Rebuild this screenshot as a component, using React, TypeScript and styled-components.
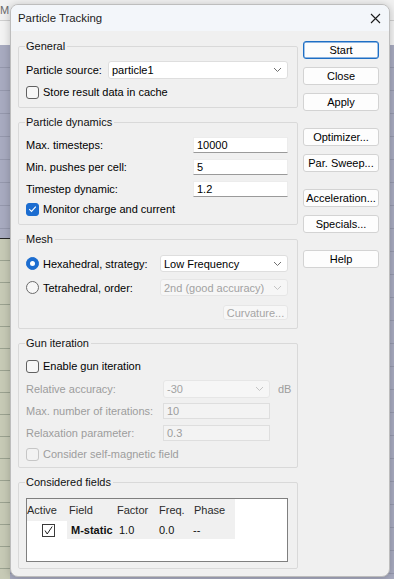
import React from 'react';
import styled, { createGlobalStyle, css } from 'styled-components';

const GlobalStyle = createGlobalStyle`
  html, body {
    margin: 0;
    padding: 0;
  }
  body {
    font-family: "Liberation Sans", Arial, sans-serif;
    font-size: 11px;
    color: #000;
  }
  * {
    box-sizing: border-box;
  }
`;

const Desktop = styled.div`
  width: 394px;
  height: 579px;
  overflow: hidden;
  display: flex;
  align-items: flex-start;
  background:
    repeating-linear-gradient(to bottom, transparent 0 21px, #9ba290 21px 22px) 0 239px / 10px 340px no-repeat,
    linear-gradient(#262626 0 1px, #c7cab6 1px) 0 238px / 10px 341px no-repeat,
    repeating-linear-gradient(to bottom, transparent 0 22px, #9598ad 22px 23px) 0 45px / 100% 100% no-repeat,
    linear-gradient(to bottom, #f1f1f1 0 20px, #cfcfcf 20px 21px, #f3f3f3 21px 45px, #a8abc0 45px);
`;

const Gutter = styled.div`
  width: 10px;
  flex: none;
  padding-top: 4px;
  font-size: 11px;
  color: #6b6b6b;
  overflow: hidden;
  white-space: nowrap;
`;

const Dialog = styled.div`
  width: 380px;
  height: 573px;
  margin-top: 4px;
  flex: none;
  background: #f0f0f0;
  border: 1px solid #bdbdbd;
  border-radius: 8px;
  box-shadow: 0 1px 8px rgba(0, 0, 0, 0.22);
  overflow: hidden;
  display: flex;
  flex-direction: column;
`;

const TitleBar = styled.div`
  height: 26px;
  flex: none;
  display: flex;
  align-items: center;
  justify-content: space-between;
  padding: 0 8px 0 7px;
  background: #f3f6fa;
`;

const Title = styled.span`
  font-family: "Liberation Sans", Arial, sans-serif;
  font-size: 11.4px;
  color: #1b1b1b;
`;

const CloseIcon = styled.svg`
  display: block;
`;

const Body = styled.div`
  flex: 1;
  display: flex;
  gap: 5px;
  padding: 8px 9px 0 7px;
`;

const Groups = styled.div`
  width: 280px;
  flex: none;
  display: flex;
  flex-direction: column;
  gap: 7px;
`;

const Group = styled.fieldset<{ $pt: number; $pb: number }>`
  margin: 0;
  min-width: 0;
  border: 1px solid #d9d9d9;
  border-radius: 2px;
  padding: ${p => p.$pt}px 9px ${p => p.$pb}px 7px;
  display: flex;
  flex-direction: column;
`;

const Legend = styled.legend`
  padding: 0 2px 0 1px;
  margin-left: -1px;
  line-height: 14px;
  font-size: 11px;
  color: #111;
`;

const Row = styled.div<{ $h: number; $mt?: number; $end?: boolean }>`
  height: ${p => p.$h}px;
  margin-top: ${p => p.$mt || 0}px;
  display: flex;
  align-items: center;
  justify-content: ${p => (p.$end ? 'flex-end' : 'flex-start')};
`;

const Label = styled.span<{ $disabled?: boolean; $w?: number }>`
  color: ${p => (p.$disabled ? '#9d9d9d' : '#000')};
  white-space: nowrap;
  ${p => p.$w && css`width: ${p.$w}px; flex: none;`}
`;

const Spacer = styled.span`
  flex: 1;
`;

const Suffix = styled.span<{ $disabled?: boolean }>`
  width: 18px;
  flex: none;
  padding-left: 8px;
  color: ${p => (p.$disabled ? '#9d9d9d' : '#000')};
`;

const Box = styled.span<{ $checked?: boolean; $disabled?: boolean }>`
  width: 13px;
  height: 13px;
  flex: none;
  margin-right: 4px;
  border-radius: 3px;
  border: 1px solid ${p => (p.$disabled ? '#c6c6c6' : p.$checked ? '#1c6dd0' : '#616161')};
  background: ${p => (p.$checked ? '#1c6dd0' : p.$disabled ? '#f2f2f2' : '#f7f7f7')};
  display: flex;
  align-items: center;
  justify-content: center;
`;

const RadioDot = styled.span<{ $checked?: boolean }>`
  width: 13px;
  height: 13px;
  flex: none;
  margin-right: 4px;
  border-radius: 50%;
  border: 1px solid ${p => (p.$checked ? '#1c6dd0' : '#6b6b6b')};
  background: ${p => (p.$checked ? '#1c6dd0' : '#f7f7f7')};
  display: flex;
  align-items: center;
  justify-content: center;

  &::after {
    content: '';
    display: ${p => (p.$checked ? 'block' : 'none')};
    width: 5px;
    height: 5px;
    border-radius: 50%;
    background: #fff;
  }
`;

const Combo = styled.div<{ $w: number; $h: number; $disabled?: boolean }>`
  width: ${p => p.$w}px;
  height: ${p => p.$h}px;
  flex: none;
  margin-left: ${p => (p.$disabled !== undefined ? 0 : 0)}px;
  display: flex;
  align-items: center;
  justify-content: space-between;
  padding: 0 5px 0 3px;
  border-radius: 3px;
  border: 1px solid ${p => (p.$disabled ? '#e6e6e6' : '#dedede')};
  background: ${p => (p.$disabled ? '#f6f6f6' : '#fff')};
  color: ${p => (p.$disabled ? '#a2a2a2' : '#000')};
  white-space: nowrap;
`;

const TextField = styled.div<{ $w: number; $disabled?: boolean }>`
  width: ${p => p.$w}px;
  height: 16px;
  flex: none;
  display: flex;
  align-items: center;
  padding-left: 3px;
  border: 1px solid ${p => (p.$disabled ? '#dedede' : '#ececec')};
  border-bottom-color: ${p => (p.$disabled ? '#dedede' : '#9a9a9a')};
  background: ${p => (p.$disabled ? '#f3f3f3' : '#fff')};
  color: ${p => (p.$disabled ? '#9d9d9d' : '#000')};
`;

const Button = styled.button<{ $primary?: boolean; $w?: number; $h?: number }>`
  width: ${p => p.$w || 76}px;
  height: ${p => p.$h || 18}px;
  flex: none;
  padding: 0;
  font-family: "Liberation Sans", Arial, sans-serif;
  font-size: 11px;
  color: #000;
  background: #fdfdfd;
  border: 1px solid #d3d3d3;
  border-radius: 3px;
  white-space: nowrap;

  ${p => p.$primary && css`
    border-color: #1f6fc5;
    box-shadow: inset 0 0 0 0.4px #1f6fc5;
  `}

  &:disabled {
    color: #a5a5a5;
    background: #f7f7f7;
    border-color: #e6e6e6;
  }
`;

const ButtonColumn = styled.div`
  width: 76px;
  flex: none;
  padding-top: 2px;
  display: flex;
  flex-direction: column;
  gap: 17px;
`;

const ButtonGroup = styled.div`
  display: flex;
  flex-direction: column;
  gap: 8px;
`;

const Table = styled.div`
  height: 64px;
  border: 1px solid #7f7f7f;
  background: #fff;
`;

const TableRow = styled.div<{ $h: number }>`
  height: ${p => p.$h}px;
  display: grid;
  grid-template-columns: 40px 48px 41px 36px 43px;
`;

const Cell = styled.div<{ $pad?: number; $bold?: boolean; $white?: boolean; $center?: boolean; $head?: boolean }>`
  display: flex;
  align-items: center;
  justify-content: ${p => (p.$center ? 'center' : 'flex-start')};
  padding-left: ${p => p.$pad || 0}px;
  background: ${p => (p.$white ? '#fff' : '#f0f0f0')};
  font-weight: ${p => (p.$bold ? 700 : 400)};
  color: ${p => (p.$head ? '#2b2b2b' : '#111')};
  white-space: nowrap;
`;

const TickBox = styled.span`
  width: 13px;
  height: 13px;
  margin-left: 2px;
  border: 1px solid #3a3a3a;
  background: #fff;
  display: flex;
  align-items: center;
  justify-content: center;
`;

const Chevron = ({ color }: { color: string }) => (
  <svg width="9" height="6" viewBox="0 0 9 6">
    <polyline points="1,1 4.5,4.5 8,1" fill="none" stroke={color} strokeWidth="1" />
  </svg>
);

const Check = ({ checked, disabled }: { checked?: boolean; disabled?: boolean }) => (
  <Box $checked={checked} $disabled={disabled}>
    {checked && (
      <svg width="9" height="8" viewBox="0 0 9 8">
        <polyline points="1.2,4.2 3.5,6.4 7.8,1.6" fill="none" stroke="#fff" strokeWidth="1.1" />
      </svg>
    )}
  </Box>
);

const App = () => (
  <>
    <GlobalStyle />
    <Desktop>
      <Gutter>M</Gutter>
      <Dialog>
        <TitleBar>
          <Title>Particle Tracking</Title>
          <CloseIcon width="11" height="11" viewBox="0 0 11 11">
            <path d="M1 1 L10 10 M10 1 L1 10" stroke="#1b1b1b" strokeWidth="1.1" fill="none" />
          </CloseIcon>
        </TitleBar>
        <Body>
          <Groups>
            <Group $pt={8} $pb={8}>
              <Legend>General</Legend>
              <Row $h={18}>
                <Label>Particle source:</Label>
                <Spacer />
                <Combo $w={180} $h={18}>
                  particle1
                  <Chevron color="#6f6f6f" />
                </Combo>
              </Row>
              <Row $h={14} $mt={6}>
                <Check />
                <Label>Store result data in cache</Label>
              </Row>
            </Group>

            <Group $pt={8} $pb={8}>
              <Legend>Particle dynamics</Legend>
              <Row $h={16}>
                <Label>Max. timesteps:</Label>
                <Spacer />
                <TextField $w={95}>10000</TextField>
              </Row>
              <Row $h={16} $mt={6}>
                <Label>Min. pushes per cell:</Label>
                <Spacer />
                <TextField $w={95}>5</TextField>
              </Row>
              <Row $h={16} $mt={6}>
                <Label>Timestep dynamic:</Label>
                <Spacer />
                <TextField $w={95}>1.2</TextField>
              </Row>
              <Row $h={14} $mt={5}>
                <Check checked />
                <Label>Monitor charge and current</Label>
              </Row>
            </Group>

            <Group $pt={9} $pb={8}>
              <Legend>Mesh</Legend>
              <Row $h={17}>
                <RadioDot $checked />
                <Label>Hexahedral, strategy:</Label>
                <Spacer />
                <Combo $w={128} $h={17}>
                  Low Frequency
                  <Chevron color="#6f6f6f" />
                </Combo>
              </Row>
              <Row $h={17} $mt={7}>
                <RadioDot />
                <Label>Tetrahedral, order:</Label>
                <Spacer />
                <Combo $w={128} $h={17} $disabled>
                  2nd (good accuracy)
                  <Chevron color="#c4c4c4" />
                </Combo>
              </Row>
              <Row $h={15} $mt={9} $end>
                <Button $w={65} $h={15} disabled>Curvature...</Button>
              </Row>
            </Group>

            <Group $pt={9} $pb={6}>
              <Legend>Gun iteration</Legend>
              <Row $h={14}>
                <Check />
                <Label>Enable gun iteration</Label>
              </Row>
              <Row $h={18} $mt={7}>
                <Label $disabled>Relative accuracy:</Label>
                <Spacer />
                <Combo $w={107} $h={18} $disabled>
                  -30
                  <Chevron color="#c4c4c4" />
                </Combo>
                <Suffix $disabled>dB</Suffix>
              </Row>
              <Row $h={16} $mt={5}>
                <Label $disabled>Max. number of iterations:</Label>
                <Spacer />
                <TextField $w={107} $disabled>10</TextField>
                <Suffix />
              </Row>
              <Row $h={16} $mt={6}>
                <Label $disabled>Relaxation parameter:</Label>
                <Spacer />
                <TextField $w={107} $disabled>0.3</TextField>
                <Suffix />
              </Row>
              <Row $h={14} $mt={6}>
                <Check disabled />
                <Label $disabled>Consider self-magnetic field</Label>
              </Row>
            </Group>

            <Group $pt={9} $pb={6}>
              <Legend>Considered fields</Legend>
              <Table>
                <TableRow $h={22}>
                  <Cell $head>Active</Cell>
                  <Cell $head $pad={2}>Field</Cell>
                  <Cell $head $pad={2}>Factor</Cell>
                  <Cell $head $pad={3}>Freq.</Cell>
                  <Cell $head $pad={2}>Phase</Cell>
                </TableRow>
                <TableRow $h={18}>
                  <Cell $white $center>
                    <TickBox>
                      <svg width="11" height="11" viewBox="0 0 11 11">
                        <polyline points="2,5.5 4.2,9 9.2,1.5" fill="none" stroke="#222" strokeWidth="1" />
                      </svg>
                    </TickBox>
                  </Cell>
                  <Cell $bold $pad={4}>M-static</Cell>
                  <Cell $pad={4}>1.0</Cell>
                  <Cell $pad={3}>0.0</Cell>
                  <Cell $pad={1}>--</Cell>
                </TableRow>
              </Table>
            </Group>
          </Groups>

          <ButtonColumn>
            <ButtonGroup>
              <Button $primary>Start</Button>
              <Button>Close</Button>
              <Button>Apply</Button>
            </ButtonGroup>
            <ButtonGroup>
              <Button>Optimizer...</Button>
              <Button>Par. Sweep...</Button>
            </ButtonGroup>
            <ButtonGroup>
              <Button>Acceleration...</Button>
              <Button>Specials...</Button>
            </ButtonGroup>
            <ButtonGroup>
              <Button>Help</Button>
            </ButtonGroup>
          </ButtonColumn>
        </Body>
      </Dialog>
    </Desktop>
  </>
);

export default App;
